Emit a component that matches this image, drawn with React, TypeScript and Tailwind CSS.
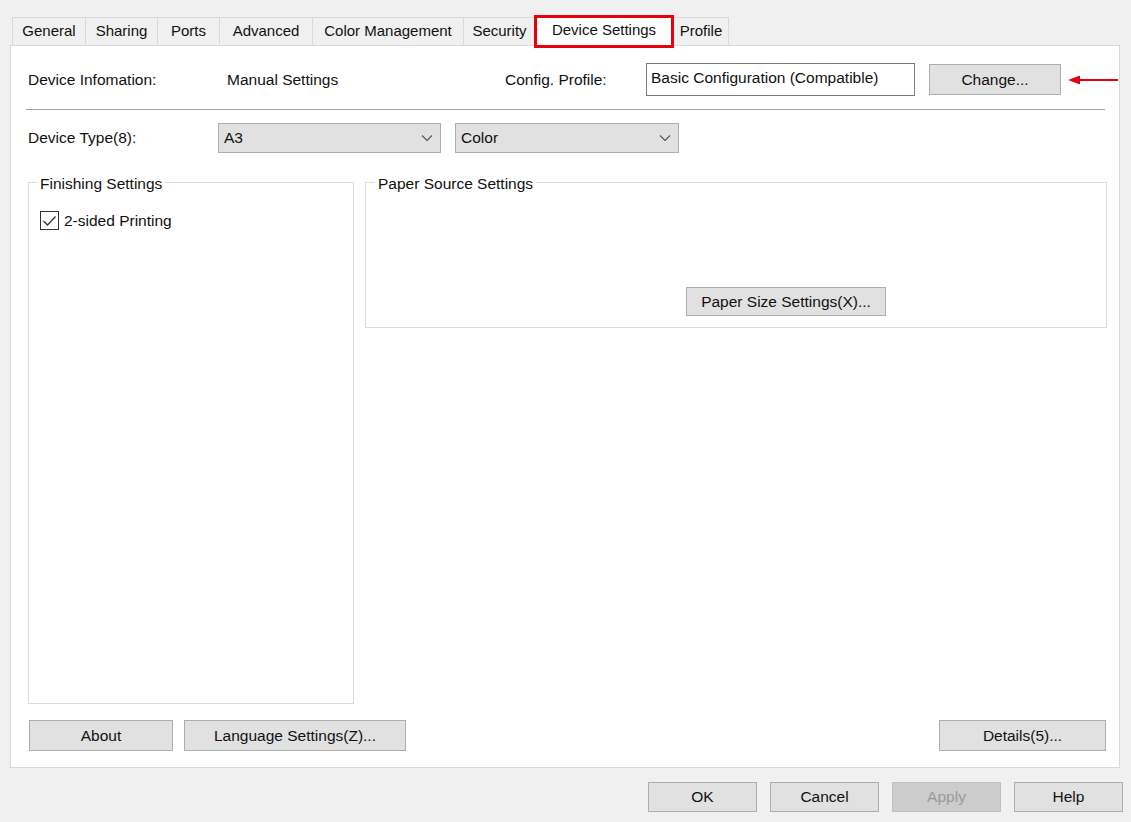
// Printer properties dialog — "Device Settings" tab, static markup.

const TABS = ['General', 'Sharing', 'Ports', 'Advanced', 'Color Management', 'Security', 'Device Settings', 'Profile'];
const TAB_W: Record<string, string> = {
  General: 'w-[74px]',
  Sharing: 'w-[73px]',
  Ports: 'w-[63px]',
  Advanced: 'w-[94px]',
  'Color Management': 'w-[152px]',
  Security: 'w-[73px]',
  'Device Settings': 'w-[140px]',
  Profile: 'w-[56px]',
};

function Chevron() {
  return (
    <svg width="12" height="8" viewBox="0 0 12 8" fill="none" aria-hidden className="flex-none">
      <path d="M1 1.5l5 5 5-5" stroke="#555" strokeWidth="1.1" />
    </svg>
  );
}

function Btn({ label, className = '', disabled = false }: { label: string; className?: string; disabled?: boolean }) {
  return (
    <button
      type="button"
      className={`flex items-center justify-center border ${
        disabled ? 'border-[#bfbfbf] bg-[#cccccc] text-[#9a9a9a]' : 'border-[#adadad] bg-[#e1e1e1] text-[#111]'
      } ${className}`}
    >
      {label}
    </button>
  );
}

function Select({ value, className = '' }: { value: string; className?: string }) {
  return (
    <div className={`flex h-[30px] items-center justify-between border border-[#adadad] bg-[#e1e1e1] pl-[5px] pr-[7px] ${className}`}>
      <span>{value}</span>
      <Chevron />
    </div>
  );
}

export default function App() {
  return (
    <div className="h-[822px] w-[1131px] bg-[#f0f0f0] pl-[10px] pt-[15px] font-['Liberation_Sans',Arial,sans-serif] text-[15.5px] text-[#111]">
      {/* tabs */}
      <div className="flex h-[30px] items-end pl-[2px]">
        {TABS.map((t, i) => {
          const active = t === 'Device Settings';
          return active ? (
            <div
              key={t}
              className={`relative z-10 -mb-[3px] -ml-[2px] flex h-[33px] items-center justify-center border-[3px] border-[#e8000b] bg-white pb-[3px] text-[15px] ${TAB_W[t]}`}
            >
              {t}
            </div>
          ) : (
            <div
              key={t}
              className={`flex h-[28px] items-center justify-center border border-b-0 border-[#d9d9d9] bg-[#f0f0f0] text-[15px] ${
                i > 0 ? '-ml-px' : ''
              } ${TAB_W[t]}`}
            >
              {t}
            </div>
          );
        })}
      </div>

      {/* tab page */}
      <div className="w-[1110px] border border-[#d9d9d9] bg-white pb-[16px] pl-[17px] pt-[17px]">
        <div className="flex h-[33px] items-center">
          <span className="w-[199px]">Device Infomation:</span>
          <span className="w-[278px]">Manual Settings</span>
          <span className="w-[141px]">Config. Profile:</span>
          <div className="h-[33px] w-[269px] border border-[#7a7a7a] bg-white pl-[4px] pt-[2px]">Basic Configuration (Compatible)</div>
          <Btn label="Change..." className="ml-[14px] h-[31px] w-[132px]" />
          <svg width="52" height="10" viewBox="0 0 52 10" aria-hidden className="ml-[6px] flex-none">
            <path d="M10 5h41" stroke="#e8000b" strokeWidth="2" />
            <path d="M1 5l12-4.5v9z" fill="#e8000b" />
          </svg>
        </div>

        <div className="-ml-[2px] mt-[13px] h-px w-[1079px] bg-[#a0a0a0]" />

        <div className="mt-[13px] flex h-[30px] items-center">
          <span className="w-[190px]">Device Type(8):</span>
          <Select value="A3" className="w-[223px]" />
          <Select value="Color" className="ml-[14px] w-[224px]" />
        </div>

        <div className="mt-[29px] flex items-start gap-[11px]">
          <div className="relative h-[522px] w-[326px] border border-[#dcdcdc] pl-[11px] pt-[26px]">
            <span className="absolute -top-[11px] left-[8px] bg-white px-[3px]">Finishing Settings</span>
            <div className="flex items-center gap-[5px]">
              <span className="flex h-[19px] w-[19px] items-center justify-center border border-[#333] bg-white">
                <svg width="15" height="12" viewBox="0 0 15 12" fill="none" aria-hidden>
                  <path d="M1.5 6l4 4 8-8.5" stroke="#333" strokeWidth="1.3" />
                </svg>
              </span>
              <span>2-sided Printing</span>
            </div>
          </div>

          <div className="relative h-[146px] w-[742px] border border-[#dcdcdc] pl-[320px] pt-[104px]">
            <span className="absolute -top-[11px] left-[9px] bg-white px-[3px]">Paper Source Settings</span>
            <Btn label="Paper Size Settings(X)..." className="h-[29px] w-[200px]" />
          </div>
        </div>

        <div className="mr-[13px] mt-[16px] flex items-center">
          <Btn label="About" className="ml-px h-[31px] w-[144px]" />
          <Btn label="Language Settings(Z)..." className="ml-[11px] h-[31px] w-[222px]" />
          <Btn label="Details(5)..." className="ml-auto h-[31px] w-[167px]" />
        </div>
      </div>

      {/* dialog buttons */}
      <div className="mt-[14px] flex justify-end gap-[13px] pr-[8px]">
        <Btn label="OK" className="h-[30px] w-[109px]" />
        <Btn label="Cancel" className="h-[30px] w-[109px]" />
        <Btn label="Apply" disabled className="h-[30px] w-[109px]" />
        <Btn label="Help" className="h-[30px] w-[109px]" />
      </div>
    </div>
  );
}
